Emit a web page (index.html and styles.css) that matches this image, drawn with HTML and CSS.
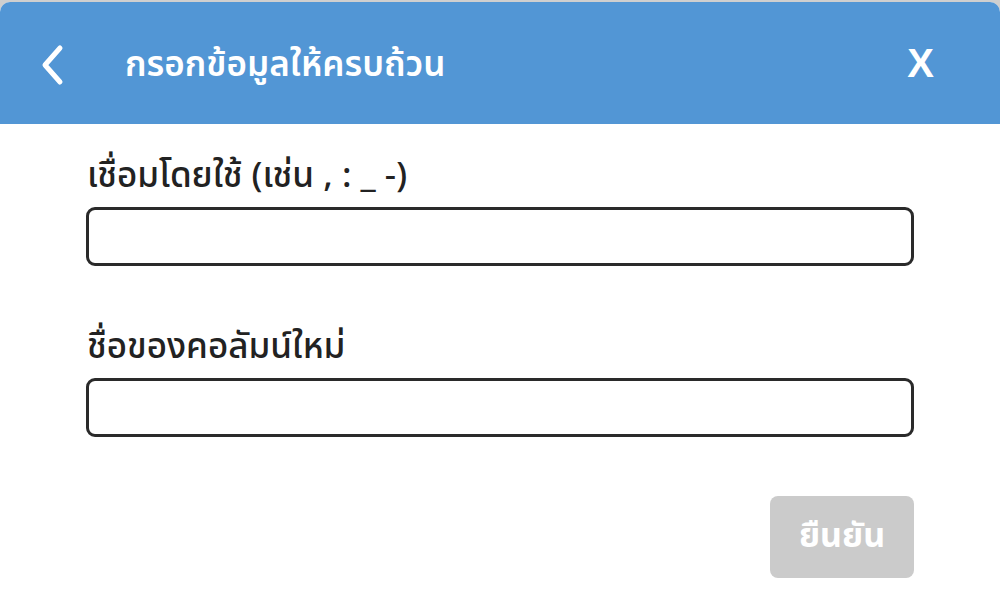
FILE: index.html
```html
<!DOCTYPE html>
<html lang="th">
<head>
<meta charset="utf-8">
<link rel="stylesheet" href="styles.css">
</head>
<body>
<div class="modal">
  <header class="modal-header">
    <button class="icon-btn back" aria-label="back">
      <svg width="26" height="42" viewBox="0 0 26 42"><path d="M21 4 L6 21 L21 38" fill="none" stroke="#fff" stroke-width="5" stroke-linecap="round" stroke-linejoin="round"/></svg>
    </button>
    <h1 class="title">กรอกข้อมูลให้ครบถ้วน</h1>
    <button class="icon-btn close" aria-label="close">X</button>
  </header>
  <main class="modal-body">
    <label class="field">
      <span class="label">เชื่อมโดยใช้ (เช่น , : _ -)</span>
      <input class="input" type="text">
    </label>
    <label class="field">
      <span class="label">ชื่อของคอลัมน์ใหม่</span>
      <input class="input" type="text">
    </label>
    <div class="actions">
      <button class="confirm" disabled>ยืนยัน</button>
    </div>
  </main>
</div>
</body>
</html>
```
FILE: styles.css
```css
html, body {
  margin: 0;
  padding: 0;
  background: #cfcfcf;
  font-family: "Noto Sans Thai", "Noto Sans", "DejaVu Sans", sans-serif;
}
body {
  padding-top: 2px;
  height: 602px;
  overflow: hidden;
}
.modal {
  background: #fff;
  border-radius: 10px 10px 0 0;
  overflow: hidden;
  height: 602px;
}
.modal-header {
  background: #5296d5;
  height: 122px;
  display: flex;
  align-items: center;
  padding: 4px 66px 0 39px;
  box-sizing: border-box;
  color: #fff;
}
.icon-btn {
  background: none;
  border: 0;
  padding: 0;
  color: #fff;
  cursor: pointer;
  display: flex;
  align-items: center;
}
.back { width: 30px; margin-right: 56px; }
.title {
  flex: 1;
  margin: 0;
  font-size: 35px;
  font-weight: 600;
  line-height: 1;
}
.close {
  font-family: "Liberation Sans", sans-serif;
  font-weight: 700;
  font-size: 40px;
  line-height: 1;
  margin-top: -4px;
}
.modal-body {
  padding: 31px 86px 0 86px;
  display: flex;
  flex-direction: column;
}
.field {
  display: flex;
  flex-direction: column;
  margin-bottom: 60px;
}
.label {
  font-size: 35px;
  font-weight: 500;
  color: #222;
  line-height: 44px;
  margin-bottom: 8px;
  padding-left: 1px;
}
.input {
  height: 59px;
  box-sizing: border-box;
  border: 3px solid #2a2a2a;
  border-radius: 9px;
  outline: none;
  background: #fff;
}
.actions {
  display: flex;
  justify-content: flex-end;
  margin-top: -1px;
}
.confirm {
  width: 144px;
  height: 82px;
  background: #cbcbcb;
  border: 0;
  border-radius: 8px;
  color: #fff;
  font-family: inherit;
  font-size: 34px;
  font-weight: 700;
  line-height: 1;
}
```
